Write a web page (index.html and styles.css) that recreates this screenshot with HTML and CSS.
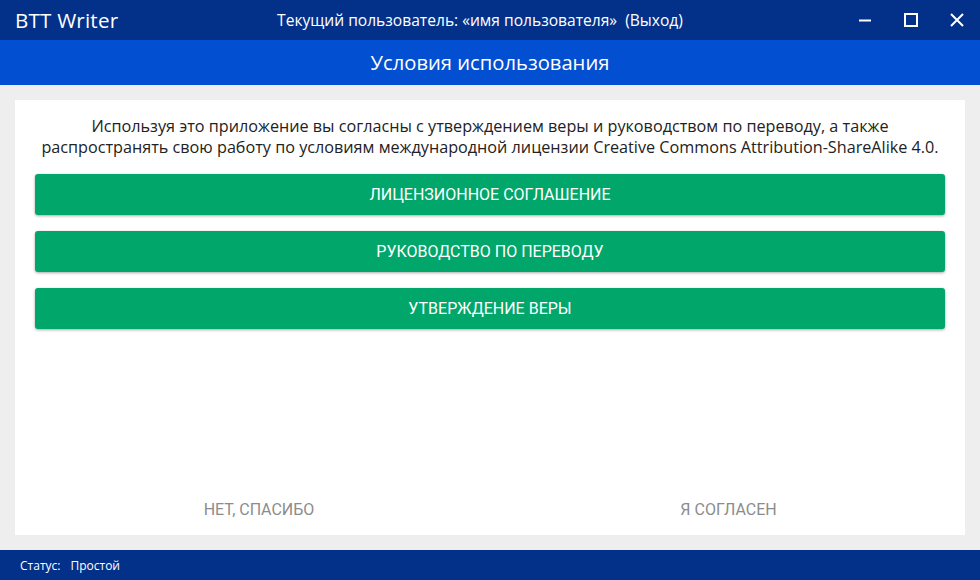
FILE: index.html
```html
<!DOCTYPE html>
<html lang="ru">
<head>
<meta charset="utf-8">
<title>BTT Writer</title>
<link rel="stylesheet" href="styles.css">
</head>
<body>
<div class="app">
  <header class="titlebar">
    <div class="app-name">BTT Writer</div>
    <div class="user">Текущий пользователь: «имя пользователя» &nbsp;(Выход)</div>
    <div class="controls">
      <svg class="ctl" width="14" height="14" viewBox="0 0 14 14"><path d="M1 7.5H13" stroke="#fff" stroke-width="2"/></svg>
      <svg class="ctl" width="14" height="14" viewBox="0 0 14 14"><rect x="1" y="1" width="12" height="12" fill="none" stroke="#fff" stroke-width="2"/></svg>
      <svg class="ctl" width="14" height="14" viewBox="0 0 14 14"><path d="M1 1L13 13M13 1L1 13" stroke="#fff" stroke-width="2"/></svg>
    </div>
  </header>
  <div class="pagehead">Условия использования</div>
  <main class="content">
    <section class="card">
      <p class="intro">Используя это приложение вы согласны с утверждением веры и руководством по переводу, а также<br>распространять свою работу по условиям международной лицензии Creative Commons Attribution-ShareAlike 4.0.</p>
      <div class="btn-list">
        <button class="btn">ЛИЦЕНЗИОННОЕ СОГЛАШЕНИЕ</button>
        <button class="btn">РУКОВОДСТВО ПО ПЕРЕВОДУ</button>
        <button class="btn">УТВЕРЖДЕНИЕ ВЕРЫ</button>
      </div>
      <div class="spacer"></div>
      <div class="actions">
        <div class="act act-left"><button class="flat">НЕТ, СПАСИБО</button></div>
        <div class="act act-right"><button class="flat">Я СОГЛАСЕН</button></div>
      </div>
    </section>
  </main>
  <footer class="status"><span class="status-label">Статус:</span><span>Простой</span></footer>
</div>
</body>
</html>
```
FILE: styles.css
```css
* { box-sizing: border-box; }
html, body { margin: 0; padding: 0; }
body { width: 980px; height: 580px; overflow: hidden; font-family: "Open Sans", "Noto Sans", sans-serif; background: #eeeeee; }
.app { display: flex; flex-direction: column; height: 580px; }
.titlebar { height: 40px; background: #03318a; color: #fff; display: flex; align-items: center; position: relative; }
.app-name { font-size: 20.6px; padding-left: 15px; letter-spacing: 0.2px; padding-bottom: 1px; }
.user { position: absolute; left: 0; right: 20px; text-align: center; font-size: 15.6px; pointer-events: none; }
.controls { margin-left: auto; display: flex; align-items: center; gap: 32px; padding-right: 16px; }
.ctl { display: block; }
.pagehead { height: 45px; background: #034fd2; color: #fff; font-size: 20.2px; display: flex; align-items: center; justify-content: center; padding-bottom: 2px; }
.content { flex: 1; padding: 15px; display: flex; }
.card { flex: 1; background: #fff; display: flex; flex-direction: column; padding: 16px 20px 0; }
.intro { margin: 0; text-align: center; font-size: 16.2px; line-height: 21px; color: #222; }
.btn-list { display: flex; flex-direction: column; gap: 16px; margin-top: 16px; }
.btn { height: 41px; border: none; border-radius: 3px; background: #00a66a; color: #fff; font-family: Roboto, sans-serif; font-size: 16px; box-shadow: 0 1px 3px rgba(0,0,0,0.35); padding: 0 0 1px; }
.spacer { flex: 1; }
.actions { display: grid; grid-template-columns: 1fr 1fr; height: 44px; }
.act { display: flex; justify-content: center; align-items: flex-start; }
.act-left { padding-right: 7px; }
.act-right { padding-left: 22px; }
.flat { background: none; border: none; font-family: Roboto, sans-serif; font-size: 16px; color: #8c8c8c; padding: 0; height: 36px; }
.status { height: 30px; background: #03318a; color: #fff; font-size: 12px; display: flex; align-items: center; padding-left: 20px; }
.status-label { margin-right: 10px; }
```
